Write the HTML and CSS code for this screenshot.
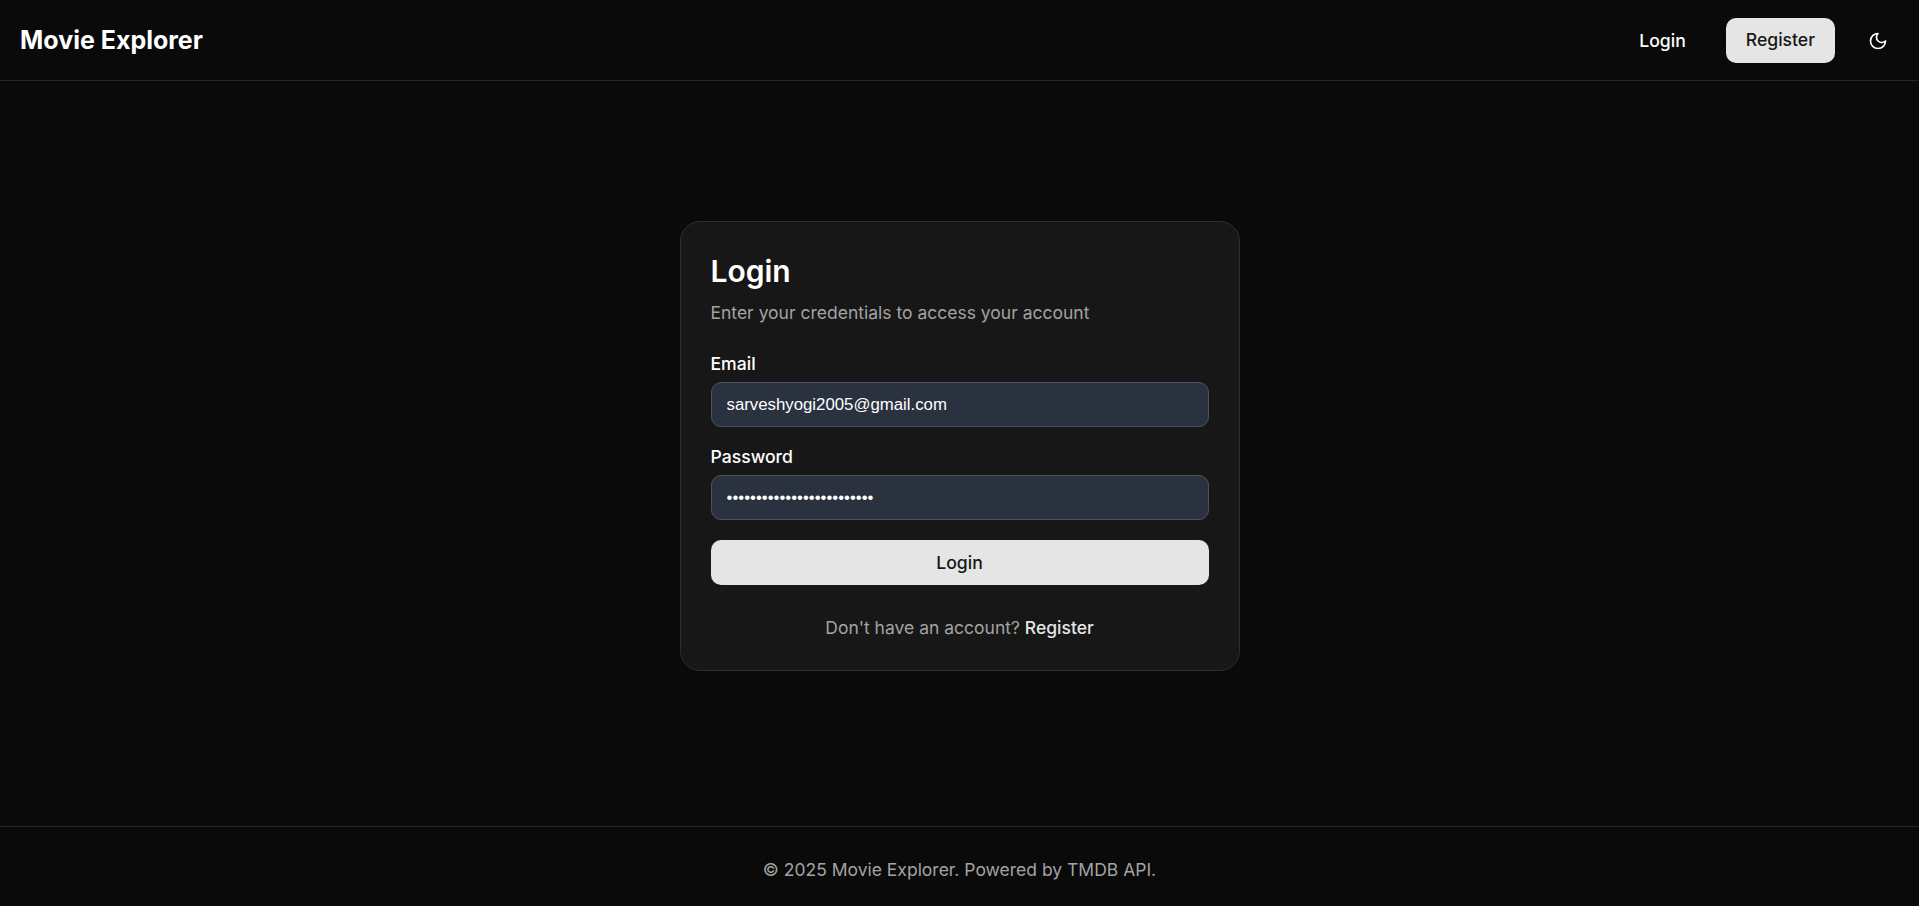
FILE: index.html
```html
<!DOCTYPE html>
<html lang="en">
<head>
<meta charset="utf-8">
<title>Movie Explorer</title>
<link rel="stylesheet" href="styles.css">
</head>
<body>
<div class="app">
  <header class="header">
    <a class="logo" href="#">Movie Explorer</a>
    <nav class="nav">
      <a class="nav-link" href="#">Login</a>
      <a class="nav-btn" href="#">Register</a>
      <button class="theme" type="button" aria-label="Toggle theme">
        <svg width="20" height="20" viewBox="0 0 24 24" fill="none" stroke="currentColor" stroke-width="2" stroke-linecap="round" stroke-linejoin="round"><path d="M12 3a6 6 0 0 0 9 9 9 9 0 1 1-9-9Z"/></svg>
      </button>
    </nav>
  </header>
  <main class="main">
    <section class="card">
      <h1 class="title">Login</h1>
      <p class="subtitle">Enter your credentials to access your account</p>
      <form class="form">
        <div class="field">
          <label class="label" for="email">Email</label>
          <input class="input" id="email" type="email" value="sarveshyogi2005@gmail.com">
        </div>
        <div class="field">
          <label class="label" for="password">Password</label>
          <input class="input" id="password" type="password" value="sarveshyogi2005@gmail.com">
        </div>
        <button class="submit" type="button">Login</button>
      </form>
      <p class="alt">Don't have an account? <a class="alt-link" href="#">Register</a></p>
    </section>
  </main>
  <footer class="footer">© 2025 Movie Explorer. Powered by TMDB API.</footer>
</div>
</body>
</html>
```
FILE: styles.css
```css
* { box-sizing: border-box; }
html, body { margin: 0; height: 100%; }
body {
  background: #0a0a0a;
  color: #fff;
  font-family: Inter, "Liberation Sans", sans-serif;
  font-size: 16px;
  line-height: 24px;
}
a { text-decoration: none; color: inherit; }
.app { min-height: 906px; display: flex; flex-direction: column; }
.header {
  height: 81px;
  border-bottom: 1px solid #262626;
  padding: 0 20px;
  display: flex;
  align-items: center;
  justify-content: space-between;
}
.logo { font-size: 25px; font-weight: 700; line-height: 32px; }
.nav { display: flex; align-items: center; gap: 20px; }
.nav-link { padding: 11px 20px 9px; font-weight: 500; font-size: 17.6px; }
.nav-btn {
  height: 45px;
  padding: 0 20px;
  display: flex;
  align-items: center;
  background: #e5e5e5;
  color: #171717;
  border-radius: 10px;
  font-weight: 500;
  font-size: 17.6px;
}
.theme {
  width: 42px;
  height: 44px;
  margin-left: 2px;
  padding: 1px 0 0;
  background: none;
  border: 0;
  color: #fff;
  display: flex;
  align-items: center;
  justify-content: center;
}
.main {
  flex: 1;
  display: flex;
  justify-content: center;
  align-items: flex-start;
  padding-top: 140px;
}
.card {
  width: 560px;
  height: 450px;
  background: #171717;
  border: 1px solid #2e2e2e;
  border-radius: 20px;
  padding: 30px;
}
.title { margin: 0 0 9px; font-size: 30px; line-height: 38px; font-weight: 600; }
.subtitle { margin: 0 0 27px; color: #a3a3a3; font-size: 17.5px; line-height: 28px; }
.form { display: flex; flex-direction: column; }
.field { display: flex; flex-direction: column; gap: 9px; margin-bottom: 20px; }
.label { font-weight: 500; font-size: 17.6px; line-height: 19px; }
.input {
  height: 45px;
  padding: 0 15px;
  background: #2a3240;
  border: 1px solid #4a5362;
  border-radius: 10px;
  color: #fff;
  font-family: "Liberation Sans", Arial, sans-serif;
  font-size: 16.8px;
  outline: 0;
}
.submit {
  height: 45px;
  border: 0;
  border-radius: 10px;
  background: #e5e5e5;
  color: #171717;
  font-family: inherit;
  font-size: 17.6px;
  font-weight: 500;
}
.alt { margin: 31px 0 0; text-align: center; color: #a3a3a3; font-size: 17.5px; line-height: 24px; }
.alt-link { color: #e5e5e5; font-weight: 500; }
.footer {
  height: 80px;
  padding-top: 6px;
  border-top: 1px solid #262626;
  display: flex;
  align-items: center;
  justify-content: center;
  color: #a3a3a3;
  font-size: 17.5px;
}
```
